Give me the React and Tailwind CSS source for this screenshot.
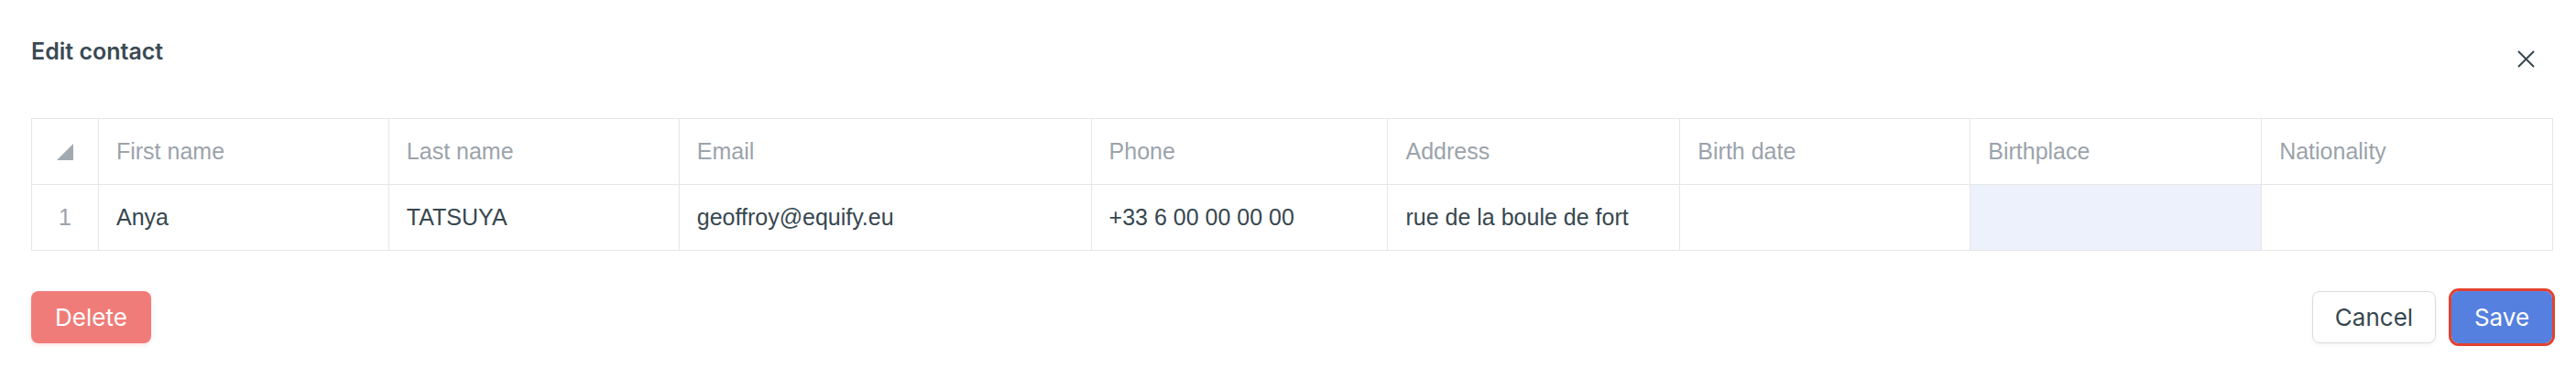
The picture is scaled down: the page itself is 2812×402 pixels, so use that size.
const COLUMNS = [
  { key: 'firstName', label: 'First name', width: 'w-[317px]' },
  { key: 'lastName', label: 'Last name', width: 'w-[317px]' },
  { key: 'email', label: 'Email', width: 'w-[450px]' },
  { key: 'phone', label: 'Phone', width: 'w-[324px]' },
  { key: 'address', label: 'Address', width: 'w-[319px]' },
  { key: 'birthDate', label: 'Birth date', width: 'w-[317px]' },
  { key: 'birthplace', label: 'Birthplace', width: 'w-[318px]' },
  { key: 'nationality', label: 'Nationality', width: 'w-[318px]' },
];

const ROWS = [
  {
    firstName: 'Anya',
    lastName: 'TATSUYA',
    email: 'geoffroy@equify.eu',
    phone: '+33 6 00 00 00 00',
    address: 'rue de la boule de fort',
    birthDate: '',
    birthplace: '',
    nationality: '',
  },
];

const SELECTED = { row: 0, key: 'birthplace' };

function CloseIcon() {
  return (
    <svg width="19" height="19" viewBox="0 0 19 19" fill="none">
      <path d="M1 1 18 18M18 1 1 18" stroke="#37474f" strokeWidth="2" />
    </svg>
  );
}

function CornerIcon() {
  return (
    <svg width="18" height="18" viewBox="0 0 18 18">
      <path d="M18 0V18H0Z" fill="#a2a9b0" />
    </svg>
  );
}

export default function App() {
  return (
    <div className="w-[2812px] h-[402px] bg-white text-[#37474f] font-['Liberation_Sans',Arial,sans-serif]">
      {/* header */}
      <div className="h-[129px] pt-[40px] pl-[34px] pr-[45px] flex justify-between items-start">
        <h1 className="font-['Inter',sans-serif] text-[25px] leading-[32px] font-semibold text-[#3a4a54]">
          Edit contact
        </h1>
        <button className="mt-[15px] w-[19px] h-[19px] flex items-center justify-center">
          <CloseIcon />
        </button>
      </div>

      {/* sheet */}
      <div className="ml-[34px] w-[2753px] border-l border-t border-[#e6e6e6] text-[25px]">
        <div className="flex h-[72px]">
          <div className="w-[73px] h-full flex items-center justify-center border-r border-b border-[#e6e6e6]">
            <CornerIcon />
          </div>
          {COLUMNS.map((col) => (
            <div
              key={col.key}
              className={`${col.width} h-full flex items-center pl-[19px] border-r border-b border-[#e6e6e6] text-[#9ba3ab]`}
            >
              {col.label}
            </div>
          ))}
        </div>

        {ROWS.map((row, i) => (
          <div key={i} className="flex h-[72px]">
            <div className="w-[73px] h-full flex items-center justify-center border-r border-b border-[#e6e6e6] text-[#9ba3ab]">
              {i + 1}
            </div>
            {COLUMNS.map((col) => {
              const selected = SELECTED.row === i && SELECTED.key === col.key;
              return (
                <div
                  key={col.key}
                  className={`${col.width} h-full flex items-center pl-[19px] border-r border-b border-[#e6e6e6] ${
                    selected ? 'bg-[#edf1fb]' : 'bg-white'
                  }`}
                >
                  {row[col.key]}
                </div>
              );
            })}
          </div>
        ))}
      </div>

      {/* footer */}
      <div className="mt-[44px] pl-[34px] pr-[26px] flex justify-between items-center font-['Inter',sans-serif] text-[26px]">
        <button className="h-[57px] w-[131px] rounded-[8px] bg-[#f07c79] text-white shadow-[0_2px_4px_rgba(240,124,121,0.2)]">
          Delete
        </button>
        <div className="flex items-center gap-[17px]">
          <button className="h-[57px] w-[135px] rounded-[8px] bg-white border border-[#d9dcde] text-[#37474f] shadow-[0_2px_4px_rgba(0,0,0,0.05)]">
            Cancel
          </button>
          <button className="h-[57px] w-[110px] rounded-[8px] bg-[#5580e0] text-white outline-[3px] outline-solid outline-[#e2412f]">
            Save
          </button>
        </div>
      </div>
    </div>
  );
}
